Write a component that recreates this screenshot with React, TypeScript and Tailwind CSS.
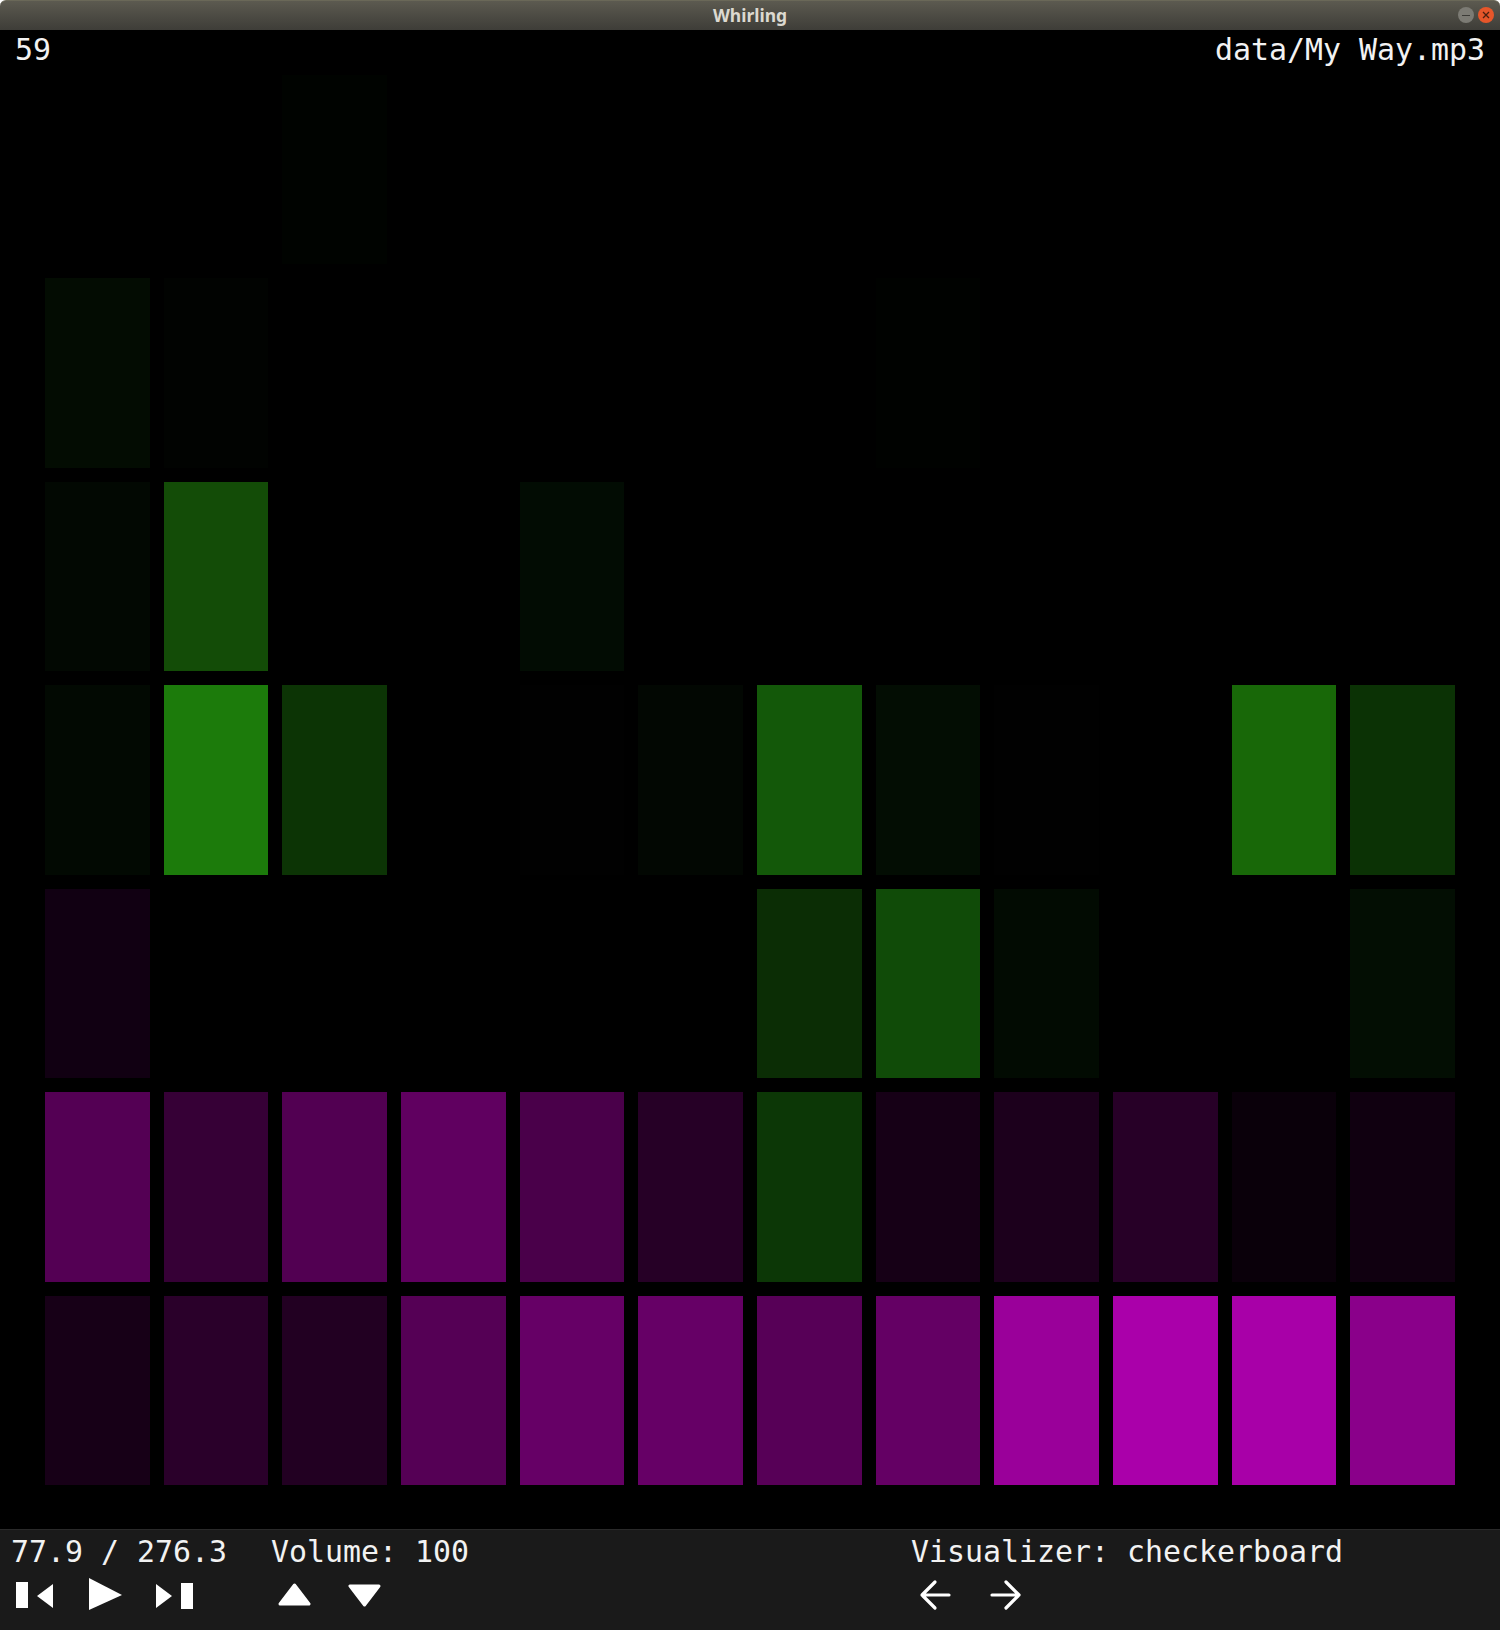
const CELLS: string[][] = [
  ["#000000", "#000000", "#000300", "#000000", "#000000", "#000000", "#000000", "#000000", "#000000", "#000000", "#000000", "#000000"],
  ["#030c02", "#010301", "#000000", "#000000", "#000000", "#000000", "#000000", "#000200", "#000000", "#000000", "#000000", "#000000"],
  ["#020802", "#134c07", "#000000", "#000000", "#020c03", "#000000", "#000000", "#000000", "#000000", "#000000", "#000000", "#000000"],
  ["#020902", "#1c7b0b", "#0c3405", "#000000", "#010101", "#020702", "#135809", "#030d03", "#010101", "#000000", "#186808", "#0b3205"],
  ["#110012", "#000000", "#000000", "#000000", "#000000", "#000000", "#0b2d05", "#104b08", "#020b02", "#000000", "#000000", "#030e03"],
  ["#540054", "#360036", "#520052", "#600060", "#4a004a", "#260026", "#0c3706", "#160016", "#1c001c", "#270027", "#0a000a", "#100010"],
  ["#170017", "#2a002a", "#220022", "#550055", "#660066", "#660066", "#570057", "#640064", "#9a009a", "#aa00aa", "#a800a8", "#8a008a"],
];

function Icon({ width, children }: { width: number; children: React.ReactNode }) {
  return (
    <svg width={width} height="36" viewBox={`0 0 ${width} 36`} className="block shrink-0">
      {children}
    </svg>
  );
}

export default function App() {
  return (
    <div className="w-[1500px] h-[1630px] flex flex-col font-['DejaVu_Sans_Mono',monospace] text-[29.9px] leading-[36px] text-[#f2f2f2]">
      <header className="h-[30px] shrink-0 relative flex items-center justify-center rounded-t-[6px] bg-gradient-to-b from-[#5c5a50] to-[#3e3d38] border-t border-[#6a6858]">
        <span className="font-['Noto_Sans',sans-serif] font-bold text-[17.5px] leading-[20px] text-[#dcd9d0] -mt-[2px]">Whirling</span>
        <div className="absolute right-[6px] top-[6px] flex gap-[4px]">
          <span className="w-[16px] h-[16px] rounded-full bg-[#7c7b74] flex items-center justify-center">
            <span className="w-[8px] h-[1px] bg-[#3c3b37]" />
          </span>
          <span className="w-[16px] h-[16px] rounded-full bg-[#e6562a] flex items-center justify-center">
            <svg width="8" height="8" viewBox="0 0 8 8"><path d="M1 1l6 6M7 1l-6 6" stroke="#4a2010" strokeWidth="1.3" /></svg>
          </span>
        </div>
      </header>

      <main className="flex-1 min-h-0 bg-black flex flex-col">
        <div className="h-[45px] shrink-0 flex justify-between items-start pl-[15px] pr-[15px] pt-[2px]">
          <span>59</span>
          <span>data/My Way.mp3</span>
        </div>
        <div className="grid grid-cols-12 grid-rows-7 gap-[14px] w-[1410px] h-[1410px] ml-[45px]">
          {CELLS.flatMap((row, r) =>
            row.map((color, c) => (
              <div key={`${r}-${c}`} style={{ backgroundColor: color }} />
            )),
          )}
        </div>
      </main>

      <footer className="h-[101px] shrink-0 bg-[#1a1a1a] border-t border-[#2a2a2a] flex pl-[11px] pt-[4px]">
        <div className="w-[900px] flex flex-col">
          <div className="flex gap-[44px] h-[36px]">
            <span>77.9 / 276.3</span>
            <span>Volume: 100</span>
          </div>
          <div className="flex items-center h-[36px] mt-[7px]">
            <div className="flex ml-[5px]">
              <Icon width={37}><path d="M0 5h12v26H0zM37 7v24L21 19z" fill="#fff" /></Icon>
              <div className="ml-[35px]">
                <Icon width={34}><path d="M1 2l33 17L1 34z" fill="#fff" transform="translate(0 -1)" /></Icon>
              </div>
              <div className="ml-[33px]">
                <Icon width={38}><path d="M1 7v24l16-12zM26 6h12v26H26z" fill="#fff" /></Icon>
              </div>
            </div>
            <div className="flex ml-[85px] gap-[37px]">
              <Icon width={33}><path d="M16.5 8L31 27H2z" fill="#fff" stroke="#fff" strokeWidth="3" strokeLinejoin="round" /></Icon>
              <Icon width={33}><path d="M2 9h29L16.5 28z" fill="#fff" stroke="#fff" strokeWidth="3" strokeLinejoin="round" /></Icon>
            </div>
          </div>
        </div>
        <div className="flex flex-col">
          <span className="h-[36px]">Visualizer: checkerboard</span>
          <div className="flex items-center h-[36px] mt-[7px] ml-[8px] gap-[39px]">
            <Icon width={32}><path d="M30 18H3M16 5L3 18l13 13" fill="none" stroke="#fff" strokeWidth="3.2" strokeLinecap="round" strokeLinejoin="round" /></Icon>
            <Icon width={32}><path d="M2 18h27M16 5l13 13-13 13" fill="none" stroke="#fff" strokeWidth="3.2" strokeLinecap="round" strokeLinejoin="round" /></Icon>
          </div>
        </div>
      </footer>
    </div>
  );
}
